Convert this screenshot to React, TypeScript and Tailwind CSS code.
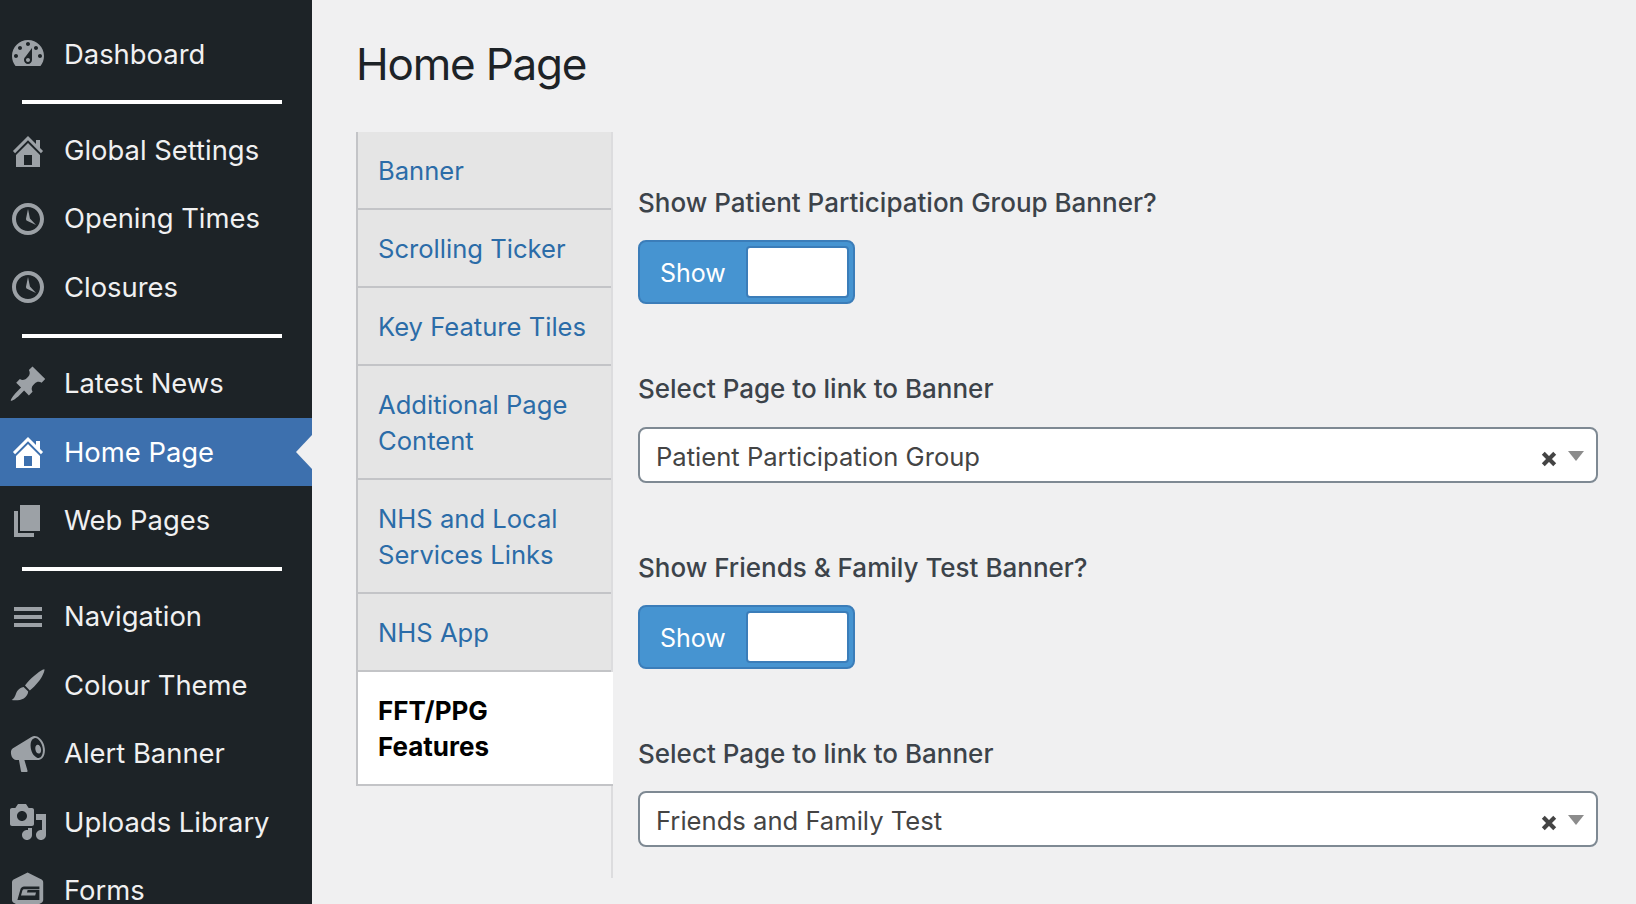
import React from "react";

type NavItem = { label: string; icon: React.ReactNode; active?: boolean };

const Icon = ({ children }: { children: React.ReactNode }) => (
  <svg viewBox="0 0 20 20" fill="currentColor" fillRule="evenodd" className="w-10 h-10 shrink-0 overflow-visible">
    {children}
  </svg>
);

const dashboard = (
  <path d="M3.76 16h12.48c1.1-1.37 1.76-3.11 1.76-5 0-4.42-3.58-8-8-8s-8 3.58-8 8c0 1.89.66 3.63 1.76 5zM10 4c.55 0 1 .45 1 1s-.45 1-1 1-1-.45-1-1 .45-1 1-1zM6 6c.55 0 1 .45 1 1s-.45 1-1 1-1-.45-1-1 .45-1 1-1zm8 0c.55 0 1 .45 1 1s-.45 1-1 1-1-.45-1-1 .45-1 1-1zm-5.37 5.55L12 7v6c0 1.1-.9 2-2 2s-2-.9-2-2c0-.57.24-1.08.63-1.45zM4 10c.55 0 1 .45 1 1s-.45 1-1 1-1-.45-1-1 .45-1 1-1zm12 0c.55 0 1 .45 1 1s-.45 1-1 1-1-.45-1-1 .45-1 1-1zm-5 3c0-.55-.45-1-1-1s-1 .45-1 1 .45 1 1 1 1-.45 1-1z" />
);
const home = (
  <path d="M16 8.5l1.53 1.53-1.06 1.06L10 4.62l-6.47 6.47-1.06-1.06L10 2.5l4 4v-2h2v4zm-6-2.46l6 5.99V18H4v-5.97zM12 17v-5H8v5h4z" />
);
const clock = (
  <path d="M10 2c4.42 0 8 3.58 8 8s-3.58 8-8 8-8-3.58-8-8 3.58-8 8-8zm0 14c3.31 0 6-2.69 6-6s-2.69-6-6-6-6 2.69-6 6 2.69 6 6 6zm-.71-5.29c.07.05.14.1.23.15l-.02.02L14 13l-3.03-3.19L10 5l-.97 4.81h.01c0 .02-.01.05-.02.09S9 9.97 9 10c0 .28.1.52.29.71z" />
);
const pin = (
  <path d="M10.44 3.02l1.82-1.82 6.36 6.35-1.83 1.82c-1.05-.68-2.48-.57-3.41.36l-.75.75c-.92.93-1.04 2.35-.35 3.41l-1.83 1.82-2.41-2.41-2.8 2.79c-.42.42-3.38 2.71-3.8 2.29s1.86-3.39 2.28-3.81l2.79-2.79L4.1 9.36l1.83-1.82c1.05.69 2.48.57 3.4-.36l.75-.75c.93-.92 1.05-2.35.36-3.41z" />
);
const pages = <path d="M6 15V2h10v13H6zm-1 1h8v2H3V5h2v11z" />;
const menu = <path d="M17 7V5H3v2h14zm0 4V9H3v2h14zm0 4v-2H3v2h14z" />;
const brush = (
  <>
    <path d="M18.2 2.2c.3.4-.9 3.6-3 6.2-1.4 1.8-3 3.4-4.3 4.3l-2.4-2.4c1-1.5 2.7-3.4 4.5-4.8 2.2-1.8 4.7-3.6 5.2-3.3z" />
    <path d="M7.8 11l2.3 2.3c-.1 1.3-.9 2.6-2.2 3.4-1.6 1-4.3 1-6.1.8 1.1-.5 1.6-1.5 2-2.6.5-1.500 1.3-3.300 4-3.900z" />
  </>
);
const megaphone = (
  <path d="M18.150 5.940c.46 1.62.38 3.220-.02 4.480-.42 1.280-1.260 2.180-2.300 2.480-.16.06-.26.06-.4.06-.06.02-.12.02-.18.02-.06.02-.14.02-.22.02H8.200l1.600 5.500c.02.14-.06.26-.14.34-.08.1-.24.16-.34.16H6.950c-.1 0-.26-.06-.34-.16-.08-.08-.16-.2-.14-.34l-1-5.500H4.250l-.02-.02c-.5.06-1.080-.18-1.540-.62s-.88-1.080-1.060-1.880c-.24-.8-.2-1.560-.02-2.200.18-.62.58-1.080 1.060-1.300l.02-.02 9-5.400c.1-.06.18-.1.24-.16.06-.04.14-.08.24-.12.16-.08.28-.12.44-.18 1.040-.3 2.240.1 3.260.98 1.040.88 1.860 2.220 2.280 3.840zm-2.580 5.980c.4-.1.74-.34 1.040-.7.58-.7.86-1.760.86-3.040-.02-.64-.1-1.300-.28-1.980-.34-1.360-1.020-2.500-1.780-3.240-.38-.38-.8-.64-1.180-.78-.18-.06-.36-.1-.56-.12-.16 0-.32 0-.48.04-.4.1-.74.34-1.040.7-.58.7-.86 1.760-.86 3.040.02.64.1 1.300.28 1.980.34 1.360 1.020 2.500 1.780 3.240.38.38.8.64 1.180.78.34.14.7.18 1.040 0zM14.600 5.400c.9-.2 1.700.8 1.900 2.100.2 1.200-.2 2.100-.9 2.200-.9.2-1.700-.7-1.900-2-.2-1.200.2-2.100.9-2.300z" />
);
const media = (
  <path d="M13 11V4c0-.55-.45-1-1-1h-1.67L9 1H5L3.67 3H2c-.55 0-1 .45-1 1v7c0 .55.45 1 1 1h10c.55 0 1-.45 1-1zM7 4.500c1.380 0 2.500 1.120 2.500 2.500S8.380 9.500 7 9.500 4.500 8.380 4.500 7 5.620 4.500 7 4.500zM14 6h5v10.500c0 1.380-1.120 2.500-2.500 2.500S14 17.880 14 16.500s1.120-2.500 2.500-2.500c.17 0 .34.02.5.05V9h-3V6zm-4 8.050V13h2v3.500c0 1.380-1.120 2.500-2.500 2.500S7 17.880 7 16.500 8.120 14 9.500 14c.17 0 .34.02.5.05z" />
);
const forms = (
  <path d="M9.800 1.200l7 3.600c.5.3.8.8.8 1.400V15c0 .6-.3 1.100-.8 1.400l-7 3.600-7-3.600C2.300 16.100 2 15.600 2 15V6.200c0-.6.3-1.100.8-1.400zM8 8.200c-.8 0-1.400.5-1.700 1.200l-1.600 5.600h11v-5H9.800l-.3 1.200h4.500l-.4 1.600H6.500l.7-2.500c.2-.5.5-.7 1-.7h7.500V8.200z" />
);

const sections: NavItem[][] = [
  [{ label: "Dashboard", icon: dashboard }],
  [
    { label: "Global Settings", icon: home },
    { label: "Opening Times", icon: clock },
    { label: "Closures", icon: clock },
  ],
  [
    { label: "Latest News", icon: pin },
    { label: "Home Page", icon: home, active: true },
    { label: "Web Pages", icon: pages },
  ],
  [
    { label: "Navigation", icon: menu },
    { label: "Colour Theme", icon: brush },
    { label: "Alert Banner", icon: megaphone },
    { label: "Uploads Library", icon: media },
    { label: "Forms", icon: forms },
  ],
];

const tabs = [
  "Banner",
  "Scrolling Ticker",
  "Key Feature Tiles",
  "Additional Page Content",
  "NHS and Local Services Links",
  "NHS App",
];

function Sidebar() {
  return (
    <aside className="w-[312px] h-full shrink-0 overflow-hidden bg-[#1d2327] pt-5">
      {sections.map((items, i) => (
        <div key={i}>
          {i > 0 && <div className="ml-[22px] my-3 h-1 w-[260px] bg-white" />}
          {items.map((item) => (
            <a
              key={item.label}
              className={
                item.active
                  ? "relative flex h-[68.4px] items-center pl-2 bg-[#3d70ae] text-white"
                  : "relative flex h-[68.4px] items-center pl-2 text-[#f0f0f1]"
              }
            >
              <span className={item.active ? "text-white" : "text-[#9ca1a6]"}>
                <Icon>{item.icon}</Icon>
              </span>
              <span className="ml-4 text-[27.4px]">{item.label}</span>
              {item.active && (
                <span className="absolute right-0 top-[17px] border-y-[17px] border-r-[16px] border-y-transparent border-r-[#f0f0f1]" />
              )}
            </a>
          ))}
        </div>
      ))}
    </aside>
  );
}

function Toggle() {
  return (
    <div className="mt-[19px] flex h-16 w-[217px] items-center rounded-lg border-2 border-[#3b7db9] bg-[#4694d1] pl-5 pr-1">
      <span className="mt-[3px] text-[25px] text-white">Show</span>
      <span className="ml-auto h-[52px] w-[103px] rounded-[4px] border-2 border-[#3b7db9] bg-white" />
    </div>
  );
}

function SelectBox({ value, className }: { value: string; className: string }) {
  return (
    <div className={`flex h-14 w-[960px] items-center rounded-lg border-2 border-[#7e8993] bg-white pl-4 pr-3 text-[#444] ${className}`}>
      <span className="mt-[5px] text-[25.6px]">{value}</span>
      <svg viewBox="0 0 14 14" className="ml-auto mt-2 mr-[1px] h-4 w-4" stroke="#444" strokeWidth="3.6">
        <path d="M2 2l10 10M12 2L2 12" />
      </svg>
      <span className="ml-[10px] mt-[2px] border-x-[8px] border-t-[10px] border-x-transparent border-t-[#8c8c8c]" />
    </div>
  );
}

const Label = ({ children, className }: { children: React.ReactNode; className: string }) => (
  <p className={`text-[26px] leading-9 font-medium text-[#3c434a] ${className}`}>{children}</p>
);

export default function App() {
  return (
    <div
      className="flex h-[904px] w-[1636px] overflow-hidden bg-[#f0f0f1]"
      style={{ fontFamily: "Inter, 'Noto Sans', sans-serif" }}
    >
      <Sidebar />
      <main className="flex-1 pl-[44px]">
        <h1 className="pt-[34px] text-[44px] leading-[60px] tracking-[-1.2px] text-[#1d2327]">Home Page</h1>
        <div className="mt-[38px] flex h-[746px]">
          <ul className="w-[255px] shrink-0 self-start border-l-2 border-[#c3c4c7]">
            {tabs.map((t) => (
              <li key={t} className="border-b-2 border-[#c3c4c7] bg-[#e5e5e5] px-5 pt-[21px] pb-[19px] text-[25.6px] leading-9 text-[#2b6ca8]">
                {t}
              </li>
            ))}
            <li className="relative -mr-[2px] border-b-2 border-[#c3c4c7] bg-white px-5 pt-[21px] pb-[19px] text-[26px] leading-9 font-bold text-black">
              FFT/PPG Features
            </li>
          </ul>
          <div className="flex-1 border-l-2 border-[#dcdcde] pl-[25px] pt-[53px]">
            <Label className="">Show Patient Participation Group Banner?</Label>
            <Toggle />
            <Label className="mt-[67px]">Select Page to link to Banner</Label>
            <SelectBox value="Patient Participation Group" className="mt-5" />
            <Label className="mt-[67px]">Show Friends &amp; Family Test Banner?</Label>
            <Toggle />
            <Label className="mt-[67px]">Select Page to link to Banner</Label>
            <SelectBox value="Friends and Family Test" className="mt-[19px]" />
          </div>
        </div>
      </main>
    </div>
  );
}
